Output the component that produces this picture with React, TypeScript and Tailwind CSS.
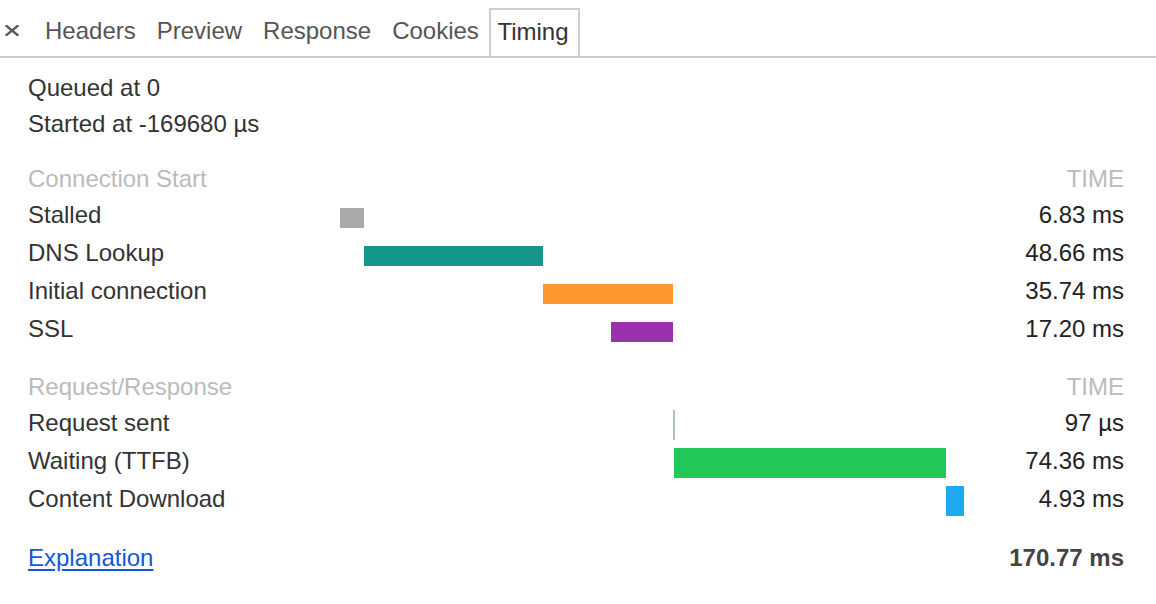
import React from "react";

const SCALE = 624 / 170.77;

type Phase = { label: string; start: number; dur: number; color: string; time: string; minW?: number };

const connection: Phase[] = [
  { label: "Stalled", start: 0, dur: 6.6, color: "bg-[#aaaaaa]", time: "6.83 ms" },
  { label: "DNS Lookup", start: 6.6, dur: 48.89, color: "bg-[#159688]", time: "48.66 ms" },
  { label: "Initial connection", start: 55.49, dur: 35.74, color: "bg-[#fd982c]", time: "35.74 ms" },
  { label: "SSL", start: 74.03, dur: 17.2, color: "bg-[#9a31ad]", time: "17.20 ms" },
];

const request: Phase[] = [
  { label: "Request sent", start: 91.23, dur: 0.097, color: "bg-[#b0bec5]", time: "97 µs", minW: 2 },
  { label: "Waiting (TTFB)", start: 91.327, dur: 74.56, color: "bg-[#22c85a]", time: "74.36 ms" },
  { label: "Content Download", start: 165.887, dur: 4.88, color: "bg-[#1eaaf1]", time: "4.93 ms" },
];

const tabs = ["Headers", "Preview", "Response", "Cookies"];

function Row({ p, tall }: { p: Phase; tall?: boolean }) {
  const left = Math.round(p.start * SCALE);
  const right = Math.round((p.start + p.dur) * SCALE);
  const width = Math.max(right - left, p.minW ?? 0);
  return (
    <>
      <div className="h-[38px] leading-[38px] text-[#333]">{p.label}</div>
      <div className={tall ? "h-[38px] pt-[6px]" : "h-[38px] pt-[12px]"}>
        <div
          className={`${p.color} ${tall ? "h-[30px]" : "h-[20px]"}`}
          style={{ marginLeft: left, width }}
        />
      </div>
      <div className="h-[38px] leading-[38px] text-right text-[#222]">{p.time}</div>
    </>
  );
}

function Heading({ title, first }: { title: string; first?: boolean }) {
  return (
    <>
      <div className={`col-span-2 h-[35px] leading-[35px] text-[#bbbbbb] ${first ? "" : "mt-[21px]"}`}>{title}</div>
      <div className={`h-[35px] leading-[35px] text-right text-[#bbbbbb] ${first ? "" : "mt-[21px]"}`}>TIME</div>
    </>
  );
}

export default function App() {
  return (
    <div className="w-[1156px] h-[604px] bg-white text-[24px] font-['Liberation_Sans',Arial,sans-serif] overflow-hidden">
      <div className="flex items-end h-[58px] border-b-2 border-[#cacaca]">
        <div className="flex items-center w-[34.5px] h-[48px] pl-[5px]">
          <svg width="14" height="11" viewBox="0 0 14 11" className="mb-[3px]">
            <path d="M1.5 1 L12.5 10 M12.5 1 L1.5 10" stroke="#5a5a5a" strokeWidth="2.4" strokeLinecap="square" />
          </svg>
        </div>
        {tabs.map((t) => (
          <div key={t} className="h-[48px] leading-[46px] px-[10.5px] text-[#555]">
            {t}
          </div>
        ))}
        <div className="h-[48px] leading-[44px] pl-[6px] pr-[9px] border-2 border-b-0 border-[#cfcfcf] text-[#333]">
          Timing
        </div>
      </div>

      <div className="pl-[28px] pr-[32px] pt-[12px]">
        <div className="leading-[36px] text-[#333]">Queued at 0</div>
        <div className="leading-[36px] text-[#333]">Started at -169680 µs</div>

        <div className="grid grid-cols-[312px_624px_1fr] mt-[19px]">
          <Heading title="Connection Start" first />
          {connection.map((p) => (
            <Row key={p.label} p={p} />
          ))}
          <Heading title="Request/Response" />
          {request.map((p) => (
            <Row key={p.label} p={p} tall />
          ))}
          <div className="col-span-2 mt-[21px] leading-[38px]">
            <a href="#" className="text-[#1558d6] underline underline-offset-[3px]">
              Explanation
            </a>
          </div>
          <div className="mt-[21px] leading-[38px] text-right font-bold text-[#444]">170.77 ms</div>
        </div>
      </div>
    </div>
  );
}
